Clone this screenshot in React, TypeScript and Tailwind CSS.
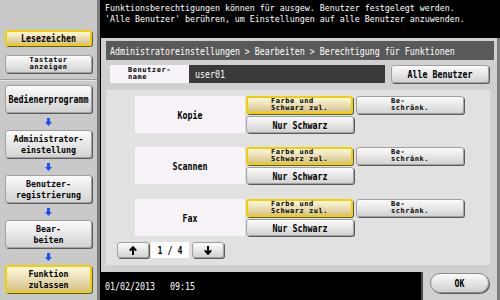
import React from "react";

function Big({ children, bold, squat }: { children: React.ReactNode; bold?: boolean; squat?: boolean }) {
  return (
    <span
      className={`inline-block origin-center whitespace-pre text-[8.3px] leading-[8px] ${squat ? "scale-y-[1.12]" : "scale-y-[1.3]"} ${bold ? "font-bold" : "font-normal"}`}
    >
      {children}
    </span>
  );
}

function Small({ lines }: { lines: string[] }) {
  return (
    <span className="inline-flex flex-col items-start whitespace-pre text-[7px] leading-[7px] tracking-[0.55px] font-bold">
      {lines.map((l) => (
        <span key={l}>{l}</span>
      ))}
    </span>
  );
}

function Btn({
  yellow,
  className,
  children,
}: {
  yellow?: boolean;
  className?: string;
  children: React.ReactNode;
}) {
  return (
    <div
      className={`flex shrink-0 flex-col items-center justify-center rounded-[3px] shadow-[1px_1px_0_#5a5a5a] ${
        yellow
          ? "border-2 border-[#f2d000] bg-linear-to-b from-[#fdf8de] to-[#d6c388]"
          : "border border-[#a0a0a0] bg-linear-to-b from-[#fbfbfb] to-[#d3d3d3]"
      } ${className ?? ""}`}
    >
      {children}
    </div>
  );
}

function TwoLine({ a, b }: { a: string; b: string }) {
  return (
    <div className="flex flex-col items-center gap-[3px]">
      <Big bold squat>{a}</Big>
      <Big bold squat>{b}</Big>
    </div>
  );
}

function BlueArrow() {
  return (
    <div className="flex h-[17px] items-center justify-center">
      <svg width="7" height="8" viewBox="0 0 7 8">
        <polygon points="2,0 5,0 5,4 7,4 3.5,8 0,4 2,4" fill="#1a50f5" />
      </svg>
    </div>
  );
}

function UpArrow() {
  return (
    <svg width="8" height="9" viewBox="0 0 8 9">
      <path d="M4 9V1.5M0.8 4.6L4 1.2L7.2 4.6" stroke="#000" strokeWidth="2" fill="none" />
    </svg>
  );
}

function DownArrow() {
  return (
    <svg width="8" height="9" viewBox="0 0 8 9">
      <path d="M4 0V7.5M0.8 4.4L4 7.8L7.2 4.4" stroke="#000" strokeWidth="2" fill="none" />
    </svg>
  );
}

function FuncRow({ name, className }: { name: string; className?: string }) {
  return (
    <div className={`ml-[29px] flex h-[37px] ${className ?? ""}`}>
      <div className="flex h-full w-[110px] items-center justify-center bg-[#f8f3f8]">
        <Big bold>{name}</Big>
      </div>
      <div className="ml-[1px] flex flex-col gap-[2px]">
        <div className="flex gap-[3px]">
          <Btn yellow className="h-[18px] w-[107px]">
            <Small lines={["Farbe und", "Schwarz zul."]} />
          </Btn>
          <Btn className="h-[18px] w-[108px]">
            <Small lines={["Be-", "schränk."]} />
          </Btn>
        </div>
        <Btn className="h-[17px] w-[108px]">
          <Big bold>Nur Schwarz</Big>
        </Btn>
      </div>
    </div>
  );
}

export default function App() {
  return (
    <div className="flex h-[300px] w-[500px] overflow-hidden font-['DejaVu_Sans_Mono',monospace] text-black">
      {/* Sidebar */}
      <div className="flex h-full w-[100px] shrink-0 flex-col border-r-[3px] border-[#7c7c7c] bg-[#c9c9c9]">
        <div className="flex flex-col px-[5px] pt-[30px]">
          <Btn yellow className="h-[16px]">
            <Big bold>Lesezeichen</Big>
          </Btn>
          <Btn className="mt-[9px] h-[18px]">
            <Small lines={["Tastatur", "anzeigen"]} />
          </Btn>
        </div>
        <div className="mt-[6px] h-[2px] border-t border-b border-t-[#9a9a9a] border-b-[#e4e4e4]" />
        <div className="flex flex-col px-[5px] pt-[4px]">
          <Btn className="h-[28px]">
            <Big bold>Bedienerprogramm</Big>
          </Btn>
          <BlueArrow />
          <Btn className="h-[28px]">
            <TwoLine a="Administrator-" b="einstellung" />
          </Btn>
          <BlueArrow />
          <Btn className="h-[28px]">
            <TwoLine a="Benutzer-" b="registrierung" />
          </Btn>
          <BlueArrow />
          <Btn className="h-[28px]">
            <TwoLine a="Bear-" b="beiten" />
          </Btn>
          <BlueArrow />
          <Btn yellow className="h-[28px]">
            <TwoLine a="Funktion" b="zulassen" />
          </Btn>
        </div>
      </div>

      {/* Right side */}
      <div className="flex h-full w-[400px] flex-col bg-black">
        <div className="flex h-[38px] flex-col items-start gap-[3px] pl-[5px] pt-[4px] text-white">
          <Big squat>Funktionsberechtigungen können für ausgew. Benutzer festgelegt werden.</Big>
          <Big squat>'Alle Benutzer' berühren, um Einstellungen auf alle Benutzer anzuwenden.</Big>
        </div>

        {/* Panel */}
        <div className="ml-[1px] flex h-[234px] flex-col border-r-[3px] border-[#7a7a7a] bg-[#d0d0d0] pl-[5px] pr-[3px] pt-[3px]">
          <div className="flex h-[19px] items-center bg-[#595959] pl-[4px] text-white">
            <Big>Administratoreinstellungen &gt; Bearbeiten &gt; Berechtigung für Funktionen</Big>
          </div>
          <div className="mt-[5px] flex h-[18px] pl-[4px]">
            <div className="flex w-[79px] items-center justify-center bg-[#f8f3f8]">
              <Small lines={["Benutzer-", "name"]} />
            </div>
            <div className="flex w-[196px] items-center bg-[#3a3a3a] pl-[6px] text-white">
              <Big>user01</Big>
            </div>
            <Btn className="ml-[6px] h-[18px] w-[98px]">
              <Big bold>Alle Benutzer</Big>
            </Btn>
          </div>
          <div className="mr-[4px] mt-[7px] flex h-[175px] flex-col bg-[#e1e1e1] pt-[6px]">
            <div className="flex flex-col gap-[14px]">
              <FuncRow name="Kopie" />
              <FuncRow name="Scannen" />
              <FuncRow name="Fax" className="mt-[1px]" />
            </div>
            <div className="ml-[11px] mt-[6px] flex h-[16px] items-center">
              <Btn className="h-[16px] w-[32px]">
                <UpArrow />
              </Btn>
              <div className="ml-[2px] flex h-[16px] w-[38px] items-center justify-center bg-white">
                <Big bold>1 / 4</Big>
              </div>
              <Btn className="ml-[3px] h-[16px] w-[32px]">
                <DownArrow />
              </Btn>
            </div>
          </div>
        </div>

        {/* Bottom */}
        <div className="flex h-[28px]">
          <div className="flex w-[321px] items-center gap-[15px] pl-[5px] text-white">
            <Big>01/02/2013</Big>
            <Big>09:15</Big>
          </div>
          <div className="flex w-[79px] border-l-2 border-r-[3px] border-l-[#4a4a4a] border-r-[#7a7a7a] bg-[#d0d0d0]">
            <div className="ml-[7px] mt-[1px] flex h-[20px] w-[59px] items-center justify-center rounded-full border border-[#8a8a8a] bg-linear-to-b from-[#fbfbfb] to-[#cfcfcf] shadow-[1px_1px_0_#5a5a5a]">
              <Big bold>OK</Big>
            </div>
          </div>
        </div>
      </div>
    </div>
  );
}
